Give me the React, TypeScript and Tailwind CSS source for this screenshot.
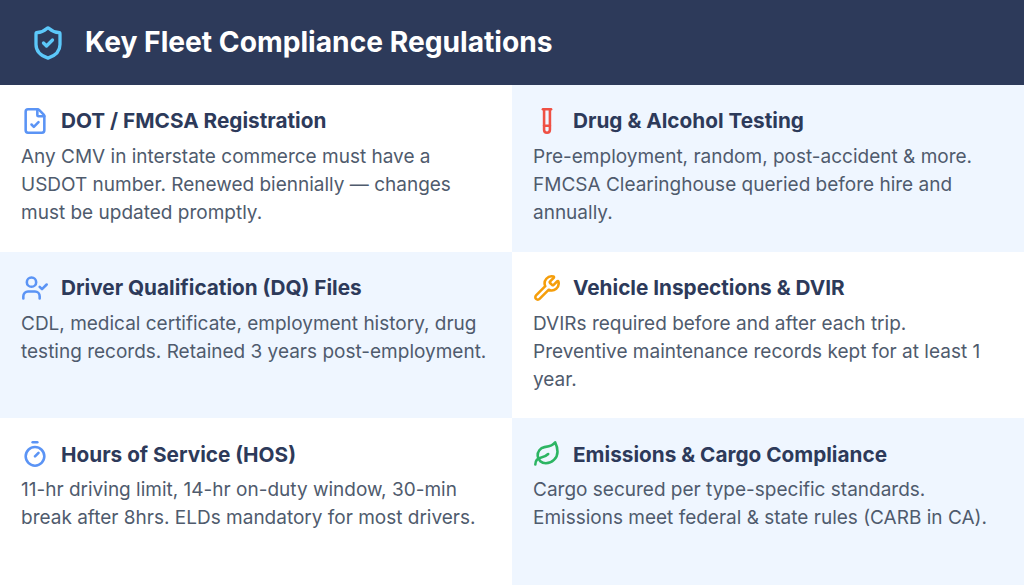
import { FileCheck, Leaf, ShieldCheck, TestTube, Timer, UserCheck, Wrench } from "lucide-react";

const CARDS = [
  {
    title: "DOT / FMCSA Registration",
    body: "Any CMV in interstate commerce must have a USDOT number. Renewed biennially — changes must be updated promptly.",
    Icon: FileCheck,
    color: "text-[#5b94f5]",
    tinted: false,
  },
  {
    title: "Drug & Alcohol Testing",
    body: "Pre-employment, random, post-accident & more. FMCSA Clearinghouse queried before hire and annually.",
    Icon: TestTube,
    color: "text-[#ef5044]",
    tinted: true,
  },
  {
    title: "Driver Qualification (DQ) Files",
    body: "CDL, medical certificate, employment history, drug testing records. Retained 3 years post-employment.",
    Icon: UserCheck,
    color: "text-[#5b94f5]",
    tinted: true,
  },
  {
    title: "Vehicle Inspections & DVIR",
    body: "DVIRs required before and after each trip. Preventive maintenance records kept for at least 1 year.",
    Icon: Wrench,
    color: "text-[#f59e0b]",
    tinted: false,
  },
  {
    title: "Hours of Service (HOS)",
    body: "11-hr driving limit, 14-hr on-duty window, 30-min break after 8hrs. ELDs mandatory for most drivers.",
    Icon: Timer,
    color: "text-[#5b94f5]",
    tinted: false,
  },
  {
    title: "Emissions & Cargo Compliance",
    body: "Cargo secured per type-specific standards. Emissions meet federal & state rules (CARB in CA).",
    Icon: Leaf,
    color: "text-[#2db563]",
    tinted: true,
  },
];

export default function App() {
  return (
    <div className="flex h-[585px] w-[1024px] flex-col overflow-hidden bg-white font-['Inter',sans-serif]">
      <header className="flex h-[85px] shrink-0 items-center gap-[19px] bg-[#2d3a5a] pl-[30px]">
        <ShieldCheck size={36} strokeWidth={2.2} className="text-[#5cc8fa]" />
        <h1 className="text-[28.2px] font-bold text-white">Key Fleet Compliance Regulations</h1>
      </header>
      <div className="grid flex-1 grid-cols-2 grid-rows-3">
        {CARDS.map(({ title, body, Icon, color, tinted }) => (
          <section key={title} className={`px-[21px] pt-[21px] ${tinted ? "bg-[#eff6ff]" : "bg-white"}`}>
            <div className="flex h-[30px] items-center gap-[12px]">
              <Icon size={28} strokeWidth={2.2} className={color} />
              <h2 className="text-[20.75px] font-bold text-[#2d3a5a]">{title}</h2>
            </div>
            <p className="mt-[7px] text-[19px] leading-[28px] text-[#4f5b6d]">{body}</p>
          </section>
        ))}
      </div>
    </div>
  );
}
